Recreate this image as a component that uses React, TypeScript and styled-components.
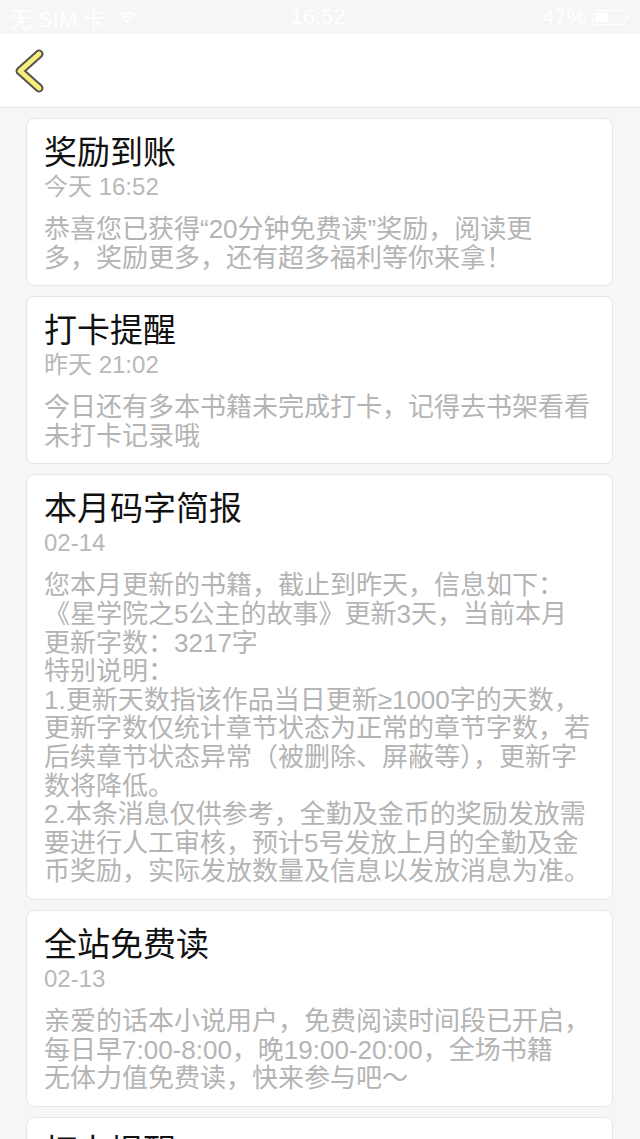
import React from 'react'
import styled, { createGlobalStyle } from 'styled-components'

interface Message {
  id: number
  title: string
  time: string
  lines: string[]
}

const messages: Message[] = [
  {
    id: 1,
    title: '奖励到账',
    time: '今天 16:52',
    lines: ['恭喜您已获得“20分钟免费读”奖励，阅读更', '多，奖励更多，还有超多福利等你来拿！']
  },
  {
    id: 2,
    title: '打卡提醒',
    time: '昨天 21:02',
    lines: ['今日还有多本书籍未完成打卡，记得去书架看看', '未打卡记录哦']
  },
  {
    id: 3,
    title: '本月码字简报',
    time: '02-14',
    lines: [
      '您本月更新的书籍，截止到昨天，信息如下：',
      '《星学院之5公主的故事》更新3天，当前本月',
      '更新字数：3217字',
      '特别说明：',
      '1.更新天数指该作品当日更新≥1000字的天数，',
      '更新字数仅统计章节状态为正常的章节字数，若',
      '后续章节状态异常（被删除、屏蔽等），更新字',
      '数将降低。',
      '2.本条消息仅供参考，全勤及金币的奖励发放需',
      '要进行人工审核，预计5号发放上月的全勤及金',
      '币奖励，实际发放数量及信息以发放消息为准。'
    ]
  },
  {
    id: 4,
    title: '全站免费读',
    time: '02-13',
    lines: [
      '亲爱的话本小说用户，免费阅读时间段已开启，',
      '每日早7:00-8:00，晚19:00-20:00，全场书籍',
      '无体力值免费读，快来参与吧～'
    ]
  },
  {
    id: 5,
    title: '打卡提醒',
    time: '02-13',
    lines: ['今日还有多本书籍未完成打卡，记得去书架看看', '未打卡记录哦']
  }
]

const GlobalStyle = createGlobalStyle`
  body {
    margin: 0;
    background: #f7f5f6;
    font-family: "Liberation Sans", "Noto Sans CJK SC", sans-serif;
  }
`

const StatusBar = styled.div`
  height: 34px;
  background: #f7f5f6;
  color: #ffffff;
  font-size: 22px;
  display: grid;
  grid-template-columns: 1fr auto 1fr;
  align-items: center;
  padding: 0 14px 0 10px;
`

const StatusLeft = styled.div`
  display: flex;
  align-items: center;
  gap: 12px;
`

const StatusRight = styled.div`
  display: flex;
  align-items: center;
  justify-content: flex-end;
  gap: 6px;
`

const Battery = styled.div`
  width: 34px;
  height: 15px;
  border: 1.5px solid #ffffff;
  border-radius: 4px;
  padding: 2px;
  box-sizing: border-box;
  position: relative;

  &::after {
    content: '';
    position: absolute;
    right: -5px;
    top: 4px;
    width: 2px;
    height: 5px;
    background: #ffffff;
    border-radius: 0 2px 2px 0;
  }
`

const BatteryLevel = styled.div`
  height: 100%;
  background: #ffffff;
  border-radius: 1px;
`

const NavBar = styled.div`
  height: 73px;
  background: #ffffff;
  border-bottom: 1px solid #e4e2e3;
  display: flex;
  align-items: center;
  padding-left: 14px;
`

const BackButton = styled.button`
  background: none;
  border: none;
  padding: 0;
  width: 36px;
  height: 48px;
  display: flex;
  align-items: center;
  cursor: pointer;
`

const List = styled.div`
  display: flex;
  flex-direction: column;
  gap: 10px;
  padding: 10px 27px 10px 26px;
`

const Card = styled.div`
  background: #ffffff;
  border: 1px solid #e7e5e6;
  border-radius: 8px;
  padding: 15px 8px 13px 17px;
`

const Title = styled.div`
  font-size: 33px;
  line-height: 38px;
  color: #111111;
`

const Time = styled.div`
  font-size: 24px;
  line-height: 30px;
  color: #b8b8b8;
`

const Body = styled.div`
  margin-top: 13px;
  font-size: 26px;
  line-height: 28.6px;
  color: #b4b4b4;
  white-space: pre;
`

const WifiIcon = () => (
  <svg width="20" height="15" viewBox="0 0 20 15">
    <path d="M10 14 L6.6 10.4 A5 5 0 0 1 13.4 10.4 Z" fill="#fff" />
    <path d="M4.6 8.3 A8 8 0 0 1 15.4 8.3" stroke="#fff" strokeWidth="2" fill="none" />
    <path d="M2.2 5.8 A11.5 11.5 0 0 1 17.8 5.8" stroke="#fff" strokeWidth="2" fill="none" />
  </svg>
)

const BackIcon = () => (
  <svg width="32" height="44" viewBox="0 0 32 44">
    <polyline points="25,5 6,22 25,39" fill="none" stroke="#555250" strokeWidth="9" strokeLinecap="round" strokeLinejoin="round" />
    <polyline points="25,5 6,22 25,39" fill="none" stroke="#f7ef7c" strokeWidth="5" strokeLinecap="round" strokeLinejoin="round" />
  </svg>
)

export default function App() {
  return (
    <>
      <GlobalStyle />
      <StatusBar>
        <StatusLeft>
          <span>无 SIM 卡</span>
          <WifiIcon />
        </StatusLeft>
        <span>16:52</span>
        <StatusRight>
          <span>47%</span>
          <Battery>
            <BatteryLevel style={{ width: '47%' }} />
          </Battery>
        </StatusRight>
      </StatusBar>
      <NavBar>
        <BackButton>
          <BackIcon />
        </BackButton>
      </NavBar>
      <List>
        {messages.map(m => (
          <Card key={m.id}>
            <Title>{m.title}</Title>
            <Time>{m.time}</Time>
            <Body>{m.lines.join('\n')}</Body>
          </Card>
        ))}
      </List>
    </>
  )
}
